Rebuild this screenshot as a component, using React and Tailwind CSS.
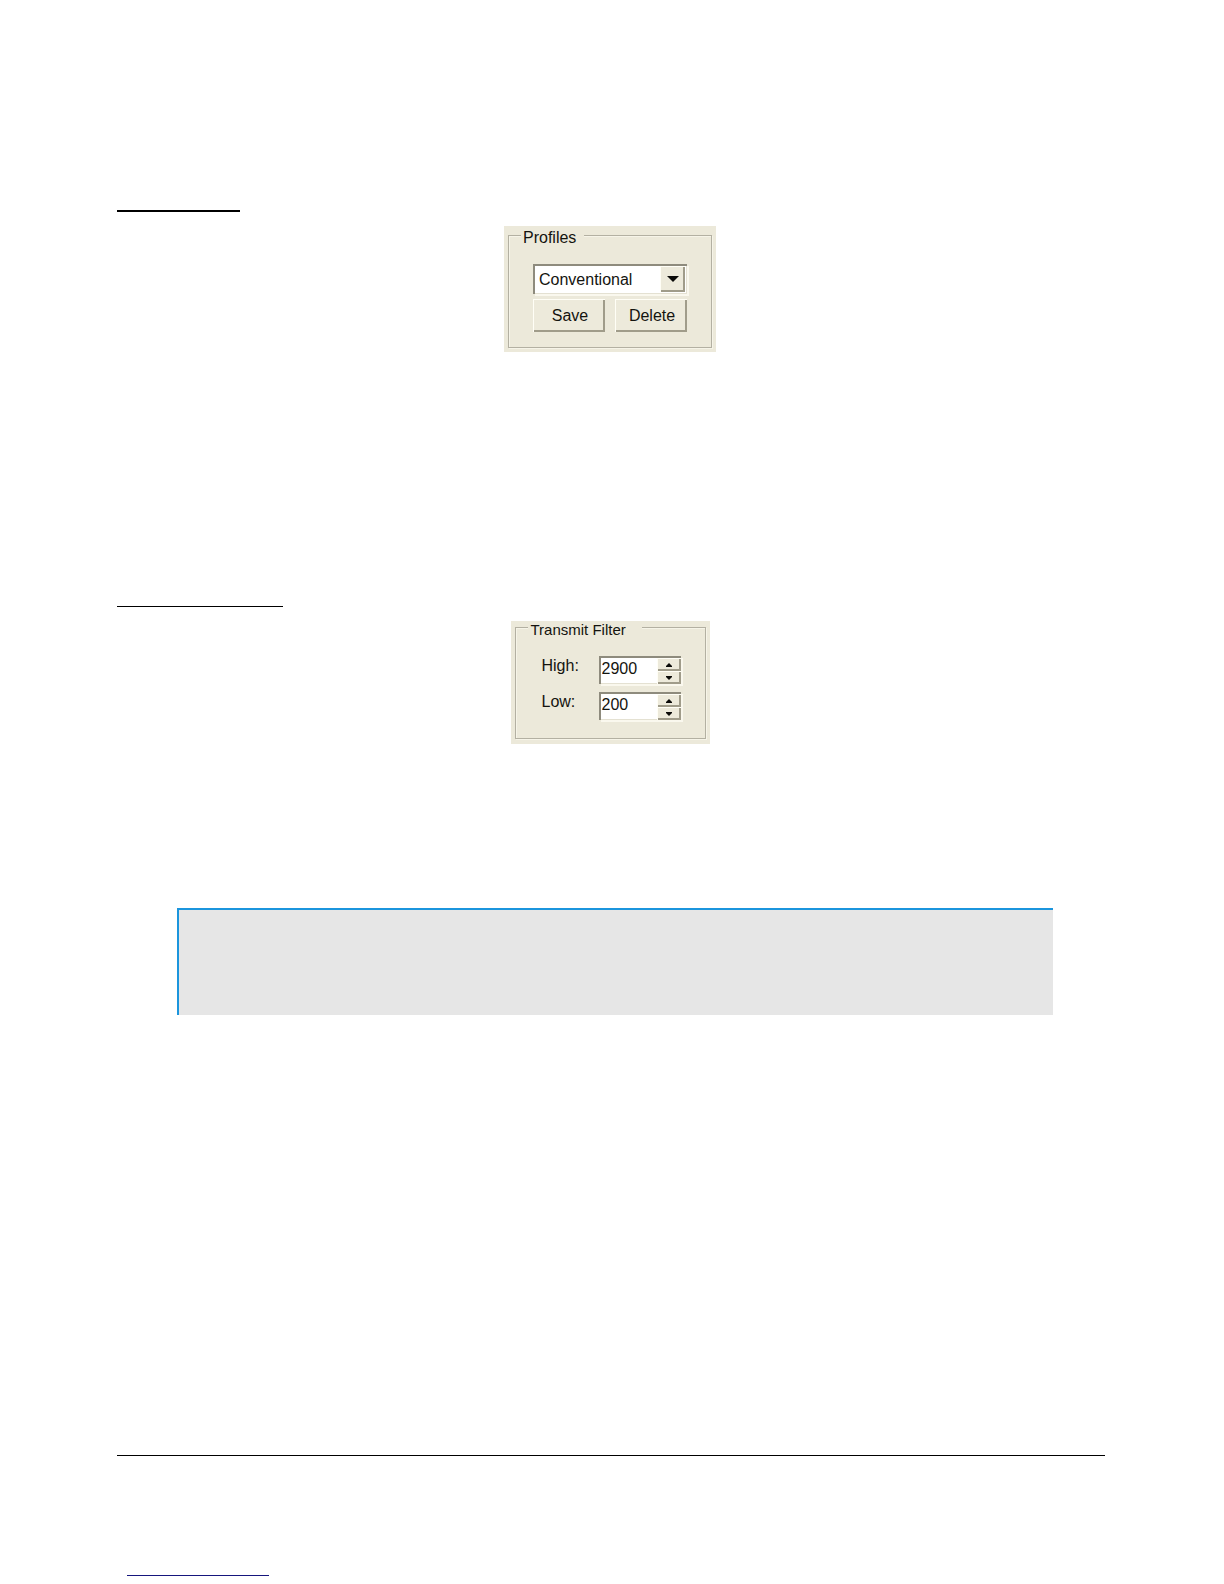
import { useState } from "react";

const RAISED =
  "bg-[#edeadb] shadow-[inset_1px_1px_0_#fffef6,inset_-2px_-2px_0_#a09c8a]";
const SUNKEN =
  "bg-white border-t-2 border-l-2 border-[#8e8b7d] shadow-[2px_2px_0_#faf8ee,inset_-1px_-1px_0_#e4e1d2]";
const ETCHED =
  "border border-[#b3b0a2] shadow-[1px_1px_0_#f6f4e8,inset_1px_1px_0_#f6f4e8]";

function ProfilesPanel() {
  return (
    <form
      className="w-[212px] bg-[#ece9da] px-1 pb-1"
      onSubmit={(e) => e.preventDefault()}
    >
      <fieldset className={`px-6 pb-[15px] ${ETCHED}`}>
        <legend className="-ml-3 h-[19px] bg-[#ece9da] pl-0.5 pr-2 leading-6">
          Profiles
        </legend>
        <div className="relative mt-[19px] h-[30px]">
          <select
            aria-label="Profile"
            defaultValue="Conventional"
            className={`h-full w-full appearance-none rounded-none pl-1 pr-7 outline-none ${SUNKEN}`}
          >
            <option>Conventional</option>
          </select>
          <span
            className={`pointer-events-none absolute right-0.5 top-0.5 flex h-[26px] w-[25px] items-center justify-center ${RAISED}`}
          >
            <svg width="12" height="6" viewBox="0 0 12 6" aria-hidden="true">
              <path d="M0 0h12L6 6z" fill="#0a0a08" />
            </svg>
          </span>
        </div>
        <div className="mt-[5px] grid grid-cols-2 gap-2.5">
          <button type="button" className={`h-[33px] pl-0.5 ${RAISED}`}>
            Save
          </button>
          <button type="button" className={`h-[33px] pl-0.5 ${RAISED}`}>
            Delete
          </button>
        </div>
      </fieldset>
    </form>
  );
}

function SpinButton({ label, up, onClick }) {
  return (
    <button
      type="button"
      aria-label={label}
      onClick={onClick}
      className={`flex w-6 flex-1 items-center justify-center ${RAISED}`}
    >
      <svg width="6" height="4" viewBox="0 0 6 4" aria-hidden="true">
        <path d={up ? "M0 4V3l3-3 3 3v1z" : "M0 0v1l3 3 3-3V0z"} fill="#0a0a08" />
      </svg>
    </button>
  );
}

function Spinner({ id, label, initial }) {
  const [value, setValue] = useState(initial);
  return (
    <div className="flex items-start justify-between">
      <label htmlFor={id} className="leading-5">
        {label}
      </label>
      <div className={`flex h-7 w-[82px] ${SUNKEN}`}>
        <input
          id={id}
          type="text"
          value={value}
          onChange={(e) => setValue(Number(e.target.value) || 0)}
          className="min-w-0 flex-1 bg-transparent pb-1 pl-px outline-none"
        />
        <div className="flex flex-col">
          <SpinButton
            label={`Increase ${label}`}
            up
            onClick={() => setValue(value + 100)}
          />
          <SpinButton
            label={`Decrease ${label}`}
            onClick={() => setValue(value - 100)}
          />
        </div>
      </div>
    </div>
  );
}

function TransmitFilterPanel() {
  return (
    <form
      className="w-[199px] bg-[#ece9da] px-1 pb-[5px]"
      onSubmit={(e) => e.preventDefault()}
    >
      <fieldset className={`px-6 pb-[18px] ${ETCHED}`}>
        <legend className="-ml-3 h-[13px] bg-[#ece9da] pl-[3px] pr-4 text-[15px] leading-[18px]">
          Transmit Filter
        </legend>
        <div className="mt-[22px] flex flex-col gap-2 pl-0.5">
          <Spinner id="filter-high" label="High:" initial={2900} />
          <Spinner id="filter-low" label="Low:" initial={200} />
        </div>
      </fieldset>
    </form>
  );
}

export default function App() {
  return (
    <main className="min-h-screen bg-white pl-[117px] pr-[119px] pt-[210px] font-['Liberation_Sans',Arial,sans-serif] text-base text-[#14140f]">
      <section>
        <div className="w-[123px] border-t-2 border-black" />
        <div className="mt-3.5 flex justify-center pr-0.5">
          <ProfilesPanel />
        </div>
      </section>
      <section className="mt-[254px]">
        <div className="w-[166px] border-t border-black" />
        <div className="mt-3.5 flex justify-center pr-0.5">
          <TransmitFilterPanel />
        </div>
      </section>
      <aside className="ml-[60px] mr-[52px] mt-[164px] h-[107px] border-l-2 border-t-2 border-[#1b95dd] bg-[#e6e6e6]" />
      <footer className="mt-[440px] border-t border-black pb-2 pl-2.5 pt-[119px]">
        <div className="w-[142px] border-t border-[#16167d]" />
      </footer>
    </main>
  );
}
